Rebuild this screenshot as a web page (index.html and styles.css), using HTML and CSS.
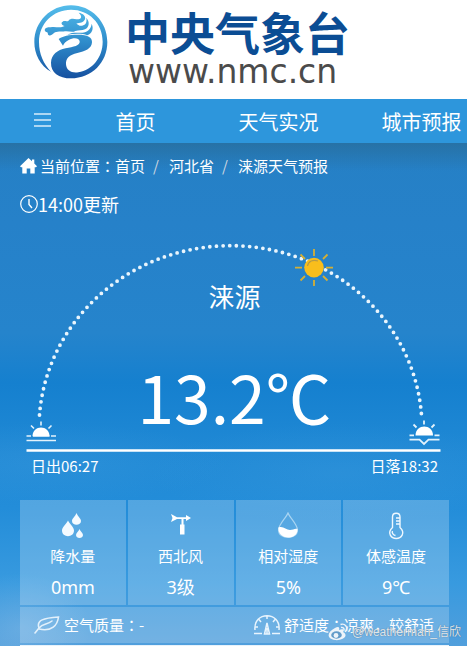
FILE: index.html
```html
<!DOCTYPE html>
<html lang="zh-CN">
<head>
<meta charset="utf-8">
<meta name="viewport" content="width=device-width, initial-scale=1">
<title>涞源天气预报</title>
<link rel="stylesheet" href="styles.css">
</head>
<body>
<header class="brand">
  <svg class="brand-mark" viewBox="43 14 220 222" aria-hidden="true">
    <defs>
      <linearGradient id="mark" x1="0" y1="14" x2="0" y2="236" gradientUnits="userSpaceOnUse">
        <stop offset="0" stop-color="#55bdeb"/>
        <stop offset=".5" stop-color="#2e8ccb"/>
        <stop offset="1" stop-color="#154f9f"/>
      </linearGradient>
    </defs>
    <g fill="url(#mark)">
      <path d="M93 214C60 196 43 160 43 125C43 64 92 15 153 15S262 64 262 125C262 187 215 234 153 234C116 234 92 216 93 187C94 163 112 149 137 144C160 140 181 136 179 123C177 111 159 111 146 119C137 124 132 129 129 136L116 116C127 107 147 103 174 103C203 103 217 111 216 126C215 146 195 153 172 158C148 163 137 174 138 192C139 210 154 219 175 216C218 209 248 170 248 124C248 69 207 28 153 28S57 70 57 125C57 161 71 192 93 214Z"/>
      <path d="M75 85C81 80 89 81 97 80C106 79 116 82 126 80L134 77C126 74 121 68 128 64C134 60 138 65 145 62C150 54 161 55 169 57C182 58 190 50 176 37C190 39 198 48 195 57C191 67 179 68 169 70L179 76C193 77 202 71 199 52C210 65 208 80 195 87C185 92 176 89 166 92C157 98 145 91 135 93C124 95 110 92 102 98C96 104 91 107 87 105C81 103 86 98 81 96C75 94 73 90 75 85Z"/>
      <path d="M142 103C158 94 174 98 187 97C201 96 213 87 215 70C222 86 216 99 202 105C187 99 164 100 142 103Z"/>
    </g>
  </svg>
  <div class="brand-text">
    <div class="brand-name">中央气象台</div>
    <div class="brand-url">www.nmc.cn</div>
  </div>
</header>

<nav class="nav" aria-label="主导航">
  <button class="nav-toggle" type="button" aria-label="菜单">
    <svg viewBox="0 0 17 14" width="17" height="14" aria-hidden="true"><path d="M0 1H17M0 7H17M0 13H17" stroke="currentColor" stroke-width="1.3"/></svg>
  </button>
  <a class="nav-link" href="#home">首页</a>
  <a class="nav-link" href="#live">天气实况</a>
  <a class="nav-link" href="#city">城市预报</a>
</nav>

<main class="weather">
  <div class="crumbs">
    <svg class="home" viewBox="0 0 17 16" aria-hidden="true"><path fill="currentColor" d="M8.5 0L12 3.3V1.5H14.3V5.5L17 8.3L16 9.2H14.7V15.5H10.3V10.5H6.7V15.5H2.3V9.2H1L0 8.3Z"/></svg>
    <span>当前位置<span class="colon">：</span></span><a href="#home">首页</a><span class="slash">/</span><a href="#hebei">河北省</a><span class="slash">/</span><a href="#laiyuan">涞源天气预报</a>
  </div>

  <div class="updated">
    <svg class="clock" viewBox="0 0 18 18" aria-hidden="true"><g fill="none" stroke="currentColor"><circle cx="9" cy="9" r="8.3" stroke-width="1.2"/><path d="M9 4V9.5L12 13" stroke-width="1.4"/></g></svg>
    <span>14:00更新</span>
  </div>

  <section class="scene">
    <svg class="sky" viewBox="20 235 429 220" aria-hidden="true">
      <path d="M39.5 415A191.5 182.5 0 0 1 421.5 415" fill="none" stroke="#e9f5fd" stroke-width="3.8" stroke-linecap="round" stroke-dasharray="0 6.66"/>
      <path d="M26.500 450.500H440.500" stroke="#fff" stroke-width="2.600"/>
      <g stroke="#d4af35" stroke-width="1.800">
        <path d="M314 249V256M314 280V286M295 267.600H302M326 267.600H333M300.500 254.500L305 259M323 276L327.500 280.500M327.500 254.500L323 259M305 276L300.500 280.500"/>
        <circle cx="314" cy="267.600" r="9.800" fill="#f9be1c" stroke="none"/>
        <path d="M307.500 266C308.500 261 313 259.500 318 261" fill="none" stroke="#b79a45" stroke-width="1.200"/>
      </g>
      <g stroke="#e4f2fc" stroke-width="1.600" fill="none">
        <path d="M41 421.500V425.500M31 425.500L34 428.500M51.500 425.500L48.500 428.500M26.500 436H31M33 436H49.500M51 436H56M26.500 440.500H56"/>
        <path d="M32.500 436.300C32.500 424.500 49.500 424.500 49.500 436.300Z" fill="#fff" stroke="none"/>
        <path d="M424 420.500V424.500M413.500 424.500L416.500 427.500M434.500 424.500L431.500 427.500M409.500 435.300H414M434.500 435.300H439.500M409.500 439.700H419.500L424 444L428.500 439.700H439.500" stroke-width="1.800"/>
        <path d="M415.500 435.600C415.500 423.500 433 423.500 433 435.600Z" fill="#fff" stroke="none"/>
      </g>
    </svg>
    <div class="reading">
      <h1 class="place">涞源</h1>
      <div class="temp">13.2℃</div>
    </div>
  </section>
  <div class="sun-times"><span>日出06:27</span><span>日落18:32</span></div>

  <section class="metrics">
    <div class="card">
      <svg class="icon" viewBox="0 0 28 28" aria-hidden="true"><g fill="#f4faff"><path d="M9 8.500C7.500 12 3 15 3 18.500C3 26 15 26 15 18.500C15 15 10.500 12 9 8.500Z"/><path d="M17.500 1C16.500 4 13 6.500 13 9C13 14 22 14 22 9C22 6.500 18.500 4 17.500 1Z"/><path d="M20.500 17C20 19 17 21 17 23C17 27 24 27 24 23C24 21 21 19 20.500 17Z"/></g></svg>
      <span class="label">降水量</span><span class="value">0mm</span>
    </div>
    <div class="card">
      <svg class="icon" viewBox="0 0 28 28" aria-hidden="true"><path fill="#fff" d="M4 2L10 5.300H19V3L24 6L19 9V7H16.500V12.500H17.500V22.500H13V12.500H14.500V7H10L4 10L5.500 6Z"/></svg>
      <span class="label">西北风</span><span class="value">3级</span>
    </div>
    <div class="card">
      <svg class="icon" viewBox="0 0 28 28" aria-hidden="true"><path d="M14 1C12 6 4.500 12.500 4.500 18C4.500 28 23.500 28 23.500 18C23.500 12.500 16 6 14 1Z" fill="none" stroke="#a9d5f2" stroke-width="1.200"/><path fill="#fff" d="M4.500 15.500C9 13.500 12 18 16 18C19 18 21 16 23.500 17C24 29 3 28 4.500 15.500Z"/></svg>
      <span class="label">相对湿度</span><span class="value">5%</span>
    </div>
    <div class="card">
      <svg class="icon" viewBox="0 0 28 28" aria-hidden="true"><g fill="none" stroke="#eff8ff" stroke-width="1.400"><path d="M10.500 15.500V5C10.500 0 18 0 18 5V15.500C24 21 19 26.500 14.200 26.500S4.500 21 10.500 15.500Z"/><path d="M14 6H18M14 9H18M14 12H18M10.500 19C9.500 21 11.500 23 13.500 23.500"/></g></svg>
      <span class="label">体感温度</span><span class="value">9℃</span>
    </div>
  </section>

  <section class="comfort">
    <div class="comfort-item">
      <svg class="leaf" viewBox="0 0 26 18" aria-hidden="true"><g fill="none" stroke="#e2f0fb" stroke-width="1.600" stroke-linecap="round"><path d="M1 17L5 12C2 4 10 2 24.500 1C23.500 9 18 16 5 13"/><path d="M5 12C9 7 13 9 18 5"/></g></svg>
      <span>空气质量<span class="colon">：</span>-</span>
    </div>
    <div class="comfort-item">
      <svg class="gauge" viewBox="0 0 26 20" aria-hidden="true"><g fill="none" stroke="#e8f4fd" stroke-width="1.500"><path d="M1 15C-1 -4 27 -4 25 15M0 18.500H8M18 18.500H26M13 1V4M5 4.500L7 7M21 4.500L19 7M1 12H4M25 12H22"/><path d="M13 8L10.500 19H15.500ZM13 13V19"/></g></svg>
      <span>舒适度<span class="colon">：</span>凉爽，较舒适</span>
    </div>
  </section>
  <div class="next-panel"></div>
</main>

<div class="credit">
  <svg class="weibo" viewBox="0 0 20 18" aria-hidden="true"><path fill="#edf4fa" d="M7 5C10 3 12 4 11 7C15 5 17 7 15 9C22 13 13 18 7 17C-2 16 -1 9 7 5Z"/><ellipse cx="8.500" cy="12" rx="5.300" ry="3.700" fill="#619bc9"/><circle cx="8" cy="12.500" r="2.400" fill="#edf4fa"/><path d="M12.500 1.500C17 0 20 4 18.500 8M13 4.500C15 4 16.500 5.500 16 7.500" fill="none" stroke="#edf4fa" stroke-width="1.400"/></svg>
  <span>@weatherman_信欣</span>
</div>
</body>
</html>
```
FILE: styles.css
```css
* {
  box-sizing: border-box;
}

body {
  position: relative;
  min-height: 100vh;
  margin: 0;
  display: flex;
  flex-direction: column;
  overflow: hidden;
  background: #fff;
  color: #fff;
  font-family: "Noto Sans CJK SC", sans-serif;
}

a {
  color: inherit;
  text-decoration: none;
}

.brand {
  display: flex;
  gap: 17px;
  padding: 5px 34px 13px;
}

.brand-mark {
  width: 74px;
  height: 74px;
}

.brand-text {
  padding-top: 4px;
}

.brand-name {
  color: #0b4d94;
  font: bold 45px/46px "Noto Sans CJK SC", sans-serif;
}

.brand-url {
  margin-top: 3px;
  margin-left: 3px;
  color: #4b4b4b;
  font: 33px/28px "DejaVu Sans", sans-serif;
}

.nav {
  display: flex;
  height: 44px;
  overflow: hidden;
  background: #2d96dc;
}

.nav-toggle {
  flex: 0 0 64px;
  padding: 0 0 0 20px;
  border: 0;
  background: none;
  color: #d8edfa;
}

.nav-link {
  flex: 1 0 143px;
  font-size: 20px;
  line-height: 46px;
  text-align: center;
}

.weather {
  flex: 1;
  padding: 12px 18px 0 20px;
  background:
    linear-gradient(rgba(40, 104, 145, .6), rgba(40, 110, 160, 0) 28px),
    radial-gradient(ellipse 70px 55px at 20px 485px, rgba(190, 215, 240, .24), transparent),
    radial-gradient(ellipse 190px 50px at 340px 330px, rgba(80, 165, 225, .2), transparent),
    radial-gradient(ellipse 180px 40px at 50px 320px, rgba(80, 165, 225, .2), transparent),
    linear-gradient(#2580c5 0, #2681c9 80px, #2584cc 190px, #1580cf 240px, #2089d5 310px, #238dd9 365px, #389adf 440px, #529fdc 505px);
}

.colon {
  font-family: "Noto Sans CJK TC", sans-serif;
  font-feature-settings: "locl" 0;
}

.crumbs {
  display: flex;
  align-items: center;
  font-size: 15px;
  line-height: 22px;
}

.home {
  width: 17px;
  height: 16px;
  margin-right: 3px;
}

.slash {
  width: 24px;
  padding-left: 8px;
  color: #d0d8e0;
}

.updated {
  display: flex;
  align-items: center;
  margin-top: 15px;
  font-size: 18px;
  line-height: 24px;
}

.clock {
  width: 18px;
  height: 18px;
}

.scene {
  display: grid;
  margin-top: 19px;
}

.sky,
.reading {
  grid-area: 1 / 1;
}

.sky {
  display: block;
  width: 100%;
}

.reading {
  padding-top: 44px;
  text-align: center;
}

.place {
  margin: 0;
  font-size: 26px;
  font-weight: 400;
  line-height: 34px;
}

.temp {
  margin-top: 42px;
  font-size: 66px;
  line-height: 80px;
}

.sun-times {
  display: flex;
  justify-content: space-between;
  padding: 0 11px;
  font-size: 15px;
  line-height: 22px;
}

.metrics {
  display: grid;
  grid-template-columns: repeat(4, 1fr);
  gap: 2px;
  margin-top: 23px;
}

.card {
  display: flex;
  flex-direction: column;
  align-items: center;
  height: 105px;
  padding-top: 12px;
  background: rgba(255, 255, 255, .22);
}

.icon {
  width: 28px;
  height: 28px;
}

.label {
  margin-top: 4px;
  font-size: 15px;
  line-height: 24px;
}

.value {
  margin-top: 7px;
  font-family: "Noto Sans", "Noto Sans CJK SC", sans-serif;
  font-size: 18px;
  line-height: 24px;
}

.comfort {
  display: flex;
  justify-content: space-between;
  margin-top: 2px;
  padding: 0 15px 0 14px;
  background: rgba(255, 255, 255, .2);
  font-size: 15px;
  line-height: 36px;
}

.comfort-item {
  display: flex;
  align-items: center;
  gap: 4px;
}

.leaf {
  width: 26px;
  height: 18px;
}

.gauge {
  width: 26px;
  height: 20px;
}

.next-panel {
  height: 1px;
  margin-top: 2px;
  background: #e8f2fa;
}

.credit {
  position: absolute;
  right: 6px;
  bottom: 5px;
  display: flex;
  align-items: center;
  gap: 4px;
  color: rgba(240, 244, 248, .9);
  font: 12px/18px "Liberation Sans", "Noto Sans CJK SC", sans-serif;
  text-shadow: 0 0 1px rgba(60, 80, 100, .8);
}

.weibo {
  width: 20px;
  height: 18px;
}
```
